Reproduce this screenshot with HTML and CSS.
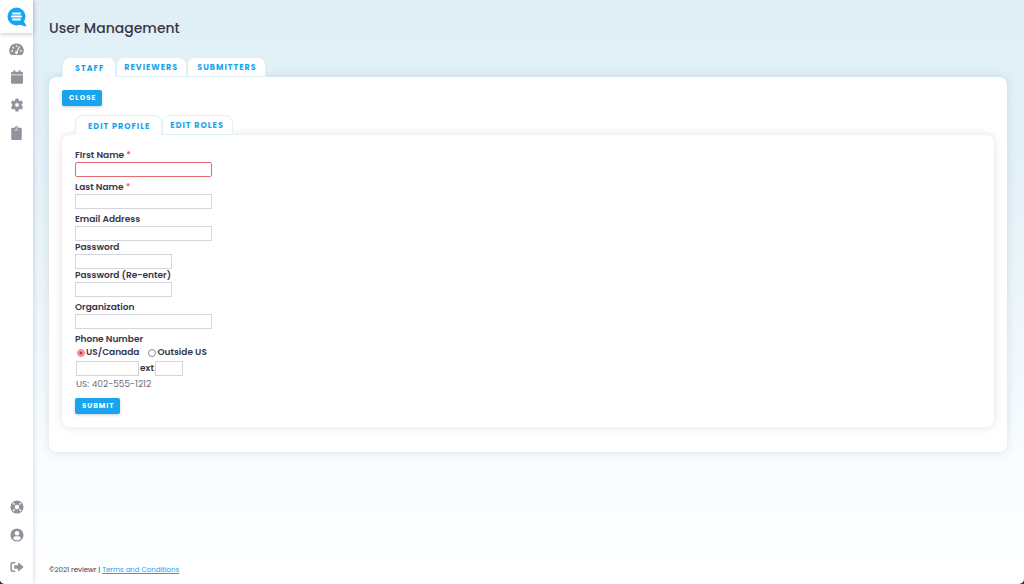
FILE: index.html
```html
<!DOCTYPE html>
<html lang="en">
<head>
<meta charset="utf-8">
<title>User Management</title>
<link rel="stylesheet" href="styles.css">
</head>
<body>
<div class="app">
  <nav class="sidebar" aria-label="Main">
    <a class="logo" href="#" aria-label="reviewr">
      <svg viewBox="0 0 20 20" width="20" height="20"><circle cx="9.500" cy="9.500" r="9" fill="#18a4ee"/><path d="M12 17l4-3 3 5z" fill="#18a4ee" stroke="#18a4ee" stroke-linejoin="round"/><path d="M6 6.500h7M5 9.500h9M6 12.500h7" stroke="#fff" stroke-width="2" stroke-linecap="round"/></svg>
    </a>
    <div class="nav-top">
      <a class="nav-link" href="#" aria-label="Dashboard"><svg viewBox="0 0 16 14" width="15" height="13"><path d="M8 .5A7.500 7.500 0 0 0 1.700 12.500q.3.500.8.500h11q.5 0 .8-.5A7.500 7.500 0 0 0 8 .5z" fill="currentColor"/><g fill="#fff"><circle cx="3.300" cy="8.500" r=".9"/><circle cx="4.500" cy="5" r=".9"/><circle cx="8" cy="3.200" r=".9"/><circle cx="12.700" cy="8.500" r=".9"/><circle cx="8" cy="10.500" r="1.500"/></g><path d="M8 10.500l3-6.500" stroke="#fff" stroke-width="1.100" stroke-linecap="round"/></svg></a>
      <a class="nav-link" href="#" aria-label="Calendar"><svg viewBox="0 0 14 16" width="12" height="14"><path d="M3 0h2v2h4V0h2v2h1.500Q14 2 14 3.500V5H0V3.500Q0 2 1.500 2H3zM0 6h14v8.500q0 1.500-1.500 1.500h-11Q0 16 0 14.500z" fill="currentColor"/></svg></a>
      <a class="nav-link" href="#" aria-label="Settings"><svg viewBox="0 0 16 16" width="14" height="14"><path fill="currentColor" fill-rule="evenodd" d="M6.500 1h3l.4 2.100 1.200.7 2-.7 1.500 2.600-1.600 1.400v1.800l1.600 1.400-1.500 2.600-2-.7-1.200.7-.4 2.100h-3l-.4-2.100-1.200-.7-2 .7-1.500-2.600L3 8.900V7.100L1.400 5.700l1.500-2.600 2 .7 1.200-.7zM8 5.500a2.500 2.500 0 1 0 0 5 2.500 2.500 0 0 0 0-5z" stroke="currentColor" stroke-width=".6" stroke-linejoin="round"/></svg></a>
      <a class="nav-link" href="#" aria-label="Forms"><svg viewBox="0 0 12 16" width="11" height="14"><path d="M1.500 2H4a2 2 0 0 1 4 0h2.500Q12 2 12 3.500v11q0 1.500-1.500 1.500h-9Q0 16 0 14.500v-11Q0 2 1.500 2z" fill="currentColor"/><circle cx="6" cy="2.200" r=".7" fill="#fff"/><path d="M3.500 4.500h5" stroke="#fff" stroke-width=".7"/></svg></a>
    </div>
    <div class="nav-bottom">
      <a class="nav-link" href="#" aria-label="Help"><svg viewBox="0 0 16 16" width="14" height="14"><circle cx="8" cy="8" r="7.500" fill="currentColor"/><path d="M3.300 3.300l2.400 2.400m4.600 4.600l2.400 2.400m0-9.400l-2.400 2.400m-4.600 4.600l-2.400 2.400" stroke="#fff" stroke-width="1.300"/><circle cx="8" cy="8" r="3.800" fill="currentColor"/><circle cx="8" cy="8" r="2.600" fill="#fff"/></svg></a>
      <a class="nav-link" href="#" aria-label="Account"><svg viewBox="0 0 16 16" width="14" height="14"><circle cx="8" cy="8" r="7.500" fill="currentColor"/><circle cx="8" cy="6" r="2.500" fill="#fff"/><path d="M3.500 12.200Q4.200 9.500 6.500 9.500h3q2.300 0 3 2.700Q10.500 14 8 14t-4.500-1.800z" fill="#fff"/></svg></a>
      <a class="nav-link nav-exit" href="#" aria-label="Log out"><svg viewBox="0 0 16 14" width="14" height="12"><path d="M6 2H3Q1.200 2 1.200 3.800v6.400Q1.200 12 3 12h3" fill="none" stroke="currentColor" stroke-width="1.800"/><path d="M4.800 5h4.500V1.500L15.800 7l-6.500 5.500V9H4.800z" fill="currentColor"/></svg></a>
    </div>
  </nav>
  <div class="page">
    <main class="content">
      <h1 class="title">User Management</h1>
      <div class="tabs" role="tablist" aria-label="Users">
        <button class="tab tab-active" type="button" role="tab" aria-selected="true">STAFF</button>
        <button class="tab" type="button" role="tab" aria-selected="false">REVIEWERS</button>
        <button class="tab tab-wide" type="button" role="tab" aria-selected="false">SUBMITTERS</button>
      </div>
      <section class="panel">
        <button class="button" type="button">CLOSE</button>
        <div class="tabs tabs-inner" role="tablist" aria-label="Staff member">
          <button class="tab tab-active" type="button" role="tab" aria-selected="true">EDIT PROFILE</button>
          <button class="tab" type="button" role="tab" aria-selected="false">EDIT ROLES</button>
        </div>
        <form class="card">
          <div class="field">
            <label class="label" for="first">FIrst Name <span class="required">*</span></label>
            <input class="input input-focus" id="first" type="text">
          </div>
          <div class="field">
            <label class="label" for="last">Last Name <span class="required">*</span></label>
            <input class="input" id="last" type="text">
          </div>
          <div class="field">
            <label class="label" for="email">Email Address</label>
            <input class="input" id="email" type="email">
            <label class="label" for="pass">Password</label>
            <input class="input input-short" id="pass" type="password">
            <label class="label" for="pass2">Password (Re-enter)</label>
            <input class="input input-short" id="pass2" type="password">
          </div>
          <div class="field">
            <label class="label" for="org">Organization</label>
            <input class="input" id="org" type="text">
          </div>
          <div class="field">
            <label class="label" for="phone">Phone Number</label>
            <div class="radios">
              <label class="choice"><input class="radio" type="radio" name="region" checked>US/Canada</label>
              <label class="choice"><input class="radio" type="radio" name="region">Outside US</label>
            </div>
            <div class="phone">
              <input class="input input-phone" id="phone" type="tel">
              <label class="label" for="ext">ext</label>
              <input class="input input-ext" id="ext" type="text">
            </div>
            <span class="hint">US: 402-555-1212</span>
          </div>
          <button class="button" type="submit">SUBMIT</button>
        </form>
      </section>
    </main>
    <footer class="footer">©2021 reviewr | <a class="footer-link" href="#">Terms and Conditions</a></footer>
  </div>
</div>
</body>
</html>
```
FILE: styles.css
```css
* { box-sizing: border-box; }

html { background: #2b2a40; }

body {
  margin: 0;
  font-family: Poppins, Inter, "Open Sans", sans-serif;
  font-size: 9px;
  color: #38374a;
}

button, input { font: inherit; }

.app {
  display: flex;
  min-height: 100vh;
  overflow: hidden;
  border-radius: 0 0 5px 5px;
  background: linear-gradient(#e0eff6, #e4f1f7 30%, #f9fdff 82%, #fff);
}

.sidebar {
  display: flex;
  flex-direction: column;
  flex: none;
  width: 33px;
  background: #fff;
  box-shadow: 0 0 5px rgba(60, 70, 110, .25);
}

.logo {
  display: flex;
  justify-content: center;
  align-items: center;
  height: 33px;
  box-shadow: 0 1px 4px rgba(60, 60, 90, .3);
}

.nav-top, .nav-bottom { display: flex; flex-direction: column; }
.nav-top { padding-top: 2px; }
.nav-bottom { margin-top: auto; padding-bottom: 3px; }

.nav-link {
  display: flex;
  justify-content: center;
  align-items: center;
  height: 28px;
  color: #92929c;
}

.nav-exit { margin-top: 4px; }

.page {
  display: flex;
  flex-direction: column;
  flex: 1;
  padding: 18px 17px 8px 16px;
}

.content { flex: 1; }

.title {
  margin: 0 0 19px;
  font-size: 14px;
  line-height: 20px;
  font-weight: 500;
}

.tabs {
  display: flex;
  align-items: flex-end;
  padding-left: 13px;
}

.tab {
  height: 20px;
  padding: 1px 8px 0 7px;
  border: 1px solid #dff0f8;
  border-radius: 8px 8px 0 0;
  background: #fff;
  color: #18a4ee;
  font-size: 8px;
  line-height: 18px;
  font-weight: 700;
  letter-spacing: 1px;
}

.tab-active {
  position: relative;
  padding: 2px 11px 0 12px;
  border-bottom-color: #fff;
}

.tab-wide { padding: 1px 8px 0 9px; }

.tabs-inner { margin-top: 9px; }

.panel {
  padding: 13px 13px 25px;
  border-radius: 8px;
  background: #fff;
  box-shadow: 0 0 8px rgba(60, 80, 120, .16);
}

.button {
  display: block;
  height: 16px;
  padding: 0 6px 0 7px;
  border: 0;
  border-radius: 2px;
  background: #18a4ee;
  color: #fff;
  font-size: 7px;
  line-height: 16px;
  font-weight: 700;
  letter-spacing: 1px;
  box-shadow: 0 1px 3px rgba(40, 60, 100, .25);
}

.card {
  display: flex;
  flex-direction: column;
  align-items: flex-start;
  gap: 4px;
  padding: 14px 13px 13px;
  border-radius: 8px;
  background: #fff;
  box-shadow: 0 0 8px rgba(60, 60, 90, .16);
}

.field {
  display: flex;
  flex-direction: column;
  align-items: flex-start;
}

.label, .choice {
  line-height: 13px;
  font-weight: 600;
}

.required { color: #f05a60; }

.input {
  width: 137px;
  height: 15px;
  padding: 0 4px;
  border: 1px solid #d3d5da;
  border-radius: 0;
  background: #fff;
}

.input-focus { border-color: #e8696d; border-radius: 2px; outline: 0; }
.input-short { width: 97px; }
.input-phone { width: 63px; }
.input-ext { width: 28px; }

.radios { display: flex; gap: 9px; padding-left: 2px; }

.choice { display: flex; align-items: center; gap: 1px; }

.radio {
  appearance: none;
  width: 8px;
  height: 8px;
  margin: 0;
  border: 1px solid #8c8c94;
  border-radius: 50%;
  background: #fff;
}

.radio:checked {
  border-color: #f0777a;
  background: radial-gradient(circle, #c9343a 1px, #f7a9aa 2px);
}

.phone {
  display: flex;
  align-items: center;
  gap: 1px;
  padding: 2px 0 2px 1px;
}

.hint {
  padding: 0 0 3px 1px;
  line-height: 13px;
  color: #6c6c78;
}

.footer { font-size: 7px; line-height: 12px; }

.footer-link { color: #18a4ee; }
```
